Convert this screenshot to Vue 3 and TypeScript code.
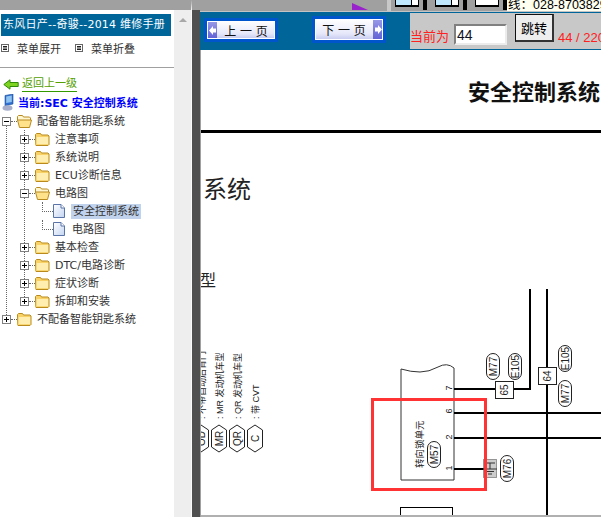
<script setup lang="ts">
interface TreeRow {
  label: string
  depth: number
  kind: 'folder' | 'open' | 'doc'
  toggle?: '+' | '-'
  active?: boolean
}

const rows: TreeRow[] = [
  { label: '配备智能钥匙系统', depth: 0, kind: 'open', toggle: '-' },
  { label: '注意事项', depth: 1, kind: 'folder', toggle: '+' },
  { label: '系统说明', depth: 1, kind: 'folder', toggle: '+' },
  { label: 'ECU诊断信息', depth: 1, kind: 'folder', toggle: '+' },
  { label: '电路图', depth: 1, kind: 'open', toggle: '-' },
  { label: '安全控制系统', depth: 2, kind: 'doc', active: true },
  { label: '电路图', depth: 2, kind: 'doc' },
  { label: '基本检查', depth: 1, kind: 'folder', toggle: '+' },
  { label: 'DTC/电路诊断', depth: 1, kind: 'folder', toggle: '+' },
  { label: '症状诊断', depth: 1, kind: 'folder', toggle: '+' },
  { label: '拆卸和安装', depth: 1, kind: 'folder', toggle: '+' },
  { label: '不配备智能钥匙系统', depth: 0, kind: 'folder', toggle: '+' },
]

const menuActions = ['菜单展开', '菜单折叠']

// 图例：竖排的六边形标记
const tags = [
  { x: 0, code: 'OD', text: ': 不带自动后背门' },
  { x: 18, code: 'MR', text: ': MR 发动机车型' },
  { x: 36, code: 'QR', text: ': QR 发动机车型' },
  { x: 54, code: 'C', text: ': 带 CVT' },
]

const pills = [
  { x: 285, y: 303, t: 'M77' },
  { x: 307, y: 303, t: 'E105' },
  { x: 357, y: 295, t: 'E105' },
  { x: 357, y: 330, t: 'M77' },
  { x: 299, y: 405, t: 'M76' },
  { x: 226, y: 391, t: 'M57' },
]

const boxes = [
  { x: 294, y: 331, t: '65' },
  { x: 337, y: 317, t: '64' },
]

const pins = [
  { y: 338, t: '7' },
  { y: 361, t: '6' },
  { y: 387, t: '2' },
  { y: 418, t: '1' },
]
</script>

<template>
  <div class="page">
    <aside class="side">
      <div class="side-gap"></div>
      <div class="side-title">东风日产--奇骏--2014 维修手册</div>
      <div class="menu-actions">
        <span v-for="a in menuActions" :key="a" class="menu-action">
          <svg width="8" height="8" viewBox="0 0 8 8"><rect x=".5" y=".5" width="7" height="7" fill="#fff" stroke="#666" /><path d="M2 2.500h4M2 4h4M2 5.500h4" stroke="#222" /></svg>
          {{ a }}
        </span>
      </div>
      <div class="back-row">
        <svg width="16" height="11" viewBox="0 0 16 11"><path d="M.8 5.500L7 .8v2.700h8.200v4H7v2.700z" fill="#7ed321" stroke="#2f8a05" /></svg>
        <a class="back-link">返回上一级</a>
      </div>
      <div class="current-row">
        <svg width="12" height="17" viewBox="0 0 12 17"><path d="M3 1.500L11 0v10L3 12z" fill="#2f6fd0" stroke="#1c4f9a" stroke-width=".6" /><path d="M4.200 2.500l5.600-1v6.500l-5.600 1z" fill="#8fc4f2" /><ellipse cx="5.500" cy="14" rx="5" ry="2.800" fill="#a6aecb" /></svg>
        <span>当前:SEC 安全控制系统</span>
      </div>
      <ul class="tree">
        <li v-for="(r, i) in rows" :key="i" class="tree-row" :class="'depth-' + r.depth">
          <span v-if="r.toggle" class="toggle">
            <svg width="9" height="9" viewBox="0 0 9 9"><rect x=".5" y=".5" width="8" height="8" fill="#fff" stroke="#808080" /><path :d="r.toggle === '+' ? 'M2 4.500h5M4.500 2v5' : 'M2 4.500h5'" stroke="#000" /></svg>
          </span>
          <span v-else class="elbow"></span>
          <span v-if="r.toggle" class="dots"></span>
          <svg v-if="r.kind === 'folder'" class="node-icon" width="15" height="13" viewBox="0 0 15 13"><path d="M.5 3V1.500l1-1h4l1 1.500h6.500l1 1v8.500l-1 1h-12l-1-1z" fill="#f8d266" stroke="#b98a1e" /><path d="M1.800 4h11.400v7.200H1.800z" fill="#ffeeb0" /></svg>
          <svg v-else-if="r.kind === 'open'" class="node-icon" width="15" height="13" viewBox="0 0 15 13"><path d="M.5 5V1.500l1-1h4l1 1.500h6l1 1v2" fill="#fff6d0" stroke="#b98a1e" /><path d="M.5 5h14l-2 7.500h-10z" fill="#ffe28a" stroke="#b98a1e" /></svg>
          <svg v-else class="node-icon doc-icon" width="12" height="14" viewBox="0 0 12 14"><defs><linearGradient id="docFill" x1="0" y1="0" x2="1" y2="1"><stop offset="0" stop-color="#ffffff" /><stop offset="1" stop-color="#c3d5f2" /></linearGradient></defs><path d="M.5.500h7.500l3.500 3.500v9.500H.5z" fill="url(#docFill)" stroke="#5b74a8" /><path d="M8 .500v3.500h3.500" fill="#fff" stroke="#5b74a8" /></svg>
          <span class="label" :class="{ active: r.active }">{{ r.label }}</span>
        </li>
      </ul>
    </aside>
    <div class="scrollbar"><span class="arrow"></span></div>
    <div class="splitter"></div>
    <main class="main">
      <div class="top-strip">
        <svg class="flag" width="16" height="8" viewBox="0 0 16 8"><path d="M0 0l16 7H0z" fill="#9922cc" /></svg>
        <span class="pane"></span>
        <span class="thumb blue"><i></i></span>
        <span class="block"></span>
        <span class="thumb split"><i></i></span>
        <span class="block"></span>
        <span class="thumb plain"><i></i></span>
        <span class="block"></span>
        <span class="hotline">线：028-87038296</span>
      </div>
      <div class="toolbar">
        <button class="page-btn prev"><span class="cap">
          <svg width="7" height="9" viewBox="0 0 7 9"><path d="M0 4.500L4 0v2.500h3v4H4V9z" fill="#fff" /></svg>
        </span><span class="txt">上 一 页</span></button>
        <button class="page-btn next"><span class="txt">下 一 页</span><span class="cap">
          <svg width="7" height="9" viewBox="0 0 7 9"><path d="M7 4.500L3 0v2.500H0v4h3V9z" fill="#fff" /></svg>
        </span></button>
        <div class="jump">
          <span class="jump-label">当前为</span>
          <input class="jump-input" value="44" />
          <button class="jump-btn">跳转</button>
          <span class="jump-count">44 / 220</span>
        </div>
      </div>
      <svg class="sheet" width="400" height="467" viewBox="0 0 400 467">
        <text x="267" y="50" class="t-title">安全控制系统</text>
        <rect x="0" y="80" width="400" height="3" fill="#000" />
        <text x="2" y="148" class="t-head">系统</text>
        <text x="-1" y="236" class="t-sub">型</text>

        <g v-for="t in tags" :key="t.code">
          <path :d="`M${t.x} 375l7.500 5v17L${t.x} 402l-7.500-5v-17z`" fill="#fff" stroke="#222" />
          <text :transform="`translate(${t.x} 388.500) rotate(-90)`" class="t-mid" text-anchor="middle" dy=".35em">{{ t.code }}</text>
          <text :transform="`translate(${t.x + 4} 369) rotate(-90)`" class="t-small">{{ t.text }}</text>
        </g>

        <path d="M200 319q10 3 19 3t18-5 16 1V430H200z" fill="#fff" stroke="#333" />
        <rect x="199.500" y="457.500" width="52" height="10" fill="#fff" stroke="#000" />
        <path d="M253 339H329V239M253 363H400M253 388H400M253 419H294" fill="none" stroke="#000" stroke-width="2" />
        <path d="M346 239V465" fill="none" stroke="#000" stroke-width="2" />

        <g v-for="b in boxes" :key="b.t">
          <rect :x="b.x + .5" :y="b.y + .5" width="18" height="17" fill="#fff" stroke="#222" />
          <text :transform="`translate(${b.x + 9} ${b.y + 9}) rotate(-90)`" class="t-mid" text-anchor="middle" dy=".35em">{{ b.t }}</text>
        </g>
        <g v-for="p in pills" :key="p.x + p.t">
          <rect :x="p.x + .5" :y="p.y + .5" width="13" height="26" rx="6.500" fill="#fff" stroke="#222" />
          <text :transform="`translate(${p.x + 7} ${p.y + 13.500}) rotate(-90)`" class="t-mid" text-anchor="middle" dy=".35em">{{ p.t }}</text>
        </g>

        <text transform="translate(222 418) rotate(-90)" class="t-label">转向锁单元</text>
        <text v-for="n in pins" :key="n.t" :transform="`translate(251 ${n.y}) rotate(-90)`" class="t-small" text-anchor="middle">{{ n.t }}</text>

        <rect x="282.500" y="409.500" width="13" height="18" fill="#ccc" stroke="#444" stroke-dasharray="1 1" />
        <path d="M282 419H296M284 413H294M285 421.500H293M287 424H291M289 419V413" fill="none" stroke="#333" />

        <rect x="171.500" y="349.500" width="113" height="90" fill="none" stroke="#f33" stroke-width="3" />
        <rect x="0" y="465" width="400" height="2" fill="#b0b0b0" />
      </svg>
    </main>
  </div>
</template>

<style scoped>
.page {
  display: flex;
  width: 601px;
  height: 517px;
  overflow: hidden;
  background: #fff;
  font-family: "DejaVu Sans", "Noto Sans CJK SC", sans-serif;
}

.side {
  width: 174px;
  flex: none;
  background: #fff;
  color: #333;
  font-size: 11px;
}

.side-gap {
  height: 10px;
  margin-bottom: 4px;
  background: #a0a0a0;
}

.side-title {
  height: 22px;
  line-height: 21px;
  margin: 0 3px 0 1px;
  padding-left: 2px;
  background: #006699;
  color: #fff;
  letter-spacing: .25px;
  white-space: nowrap;
  overflow: hidden;
}

.menu-actions {
  display: flex;
  gap: 14px;
  box-sizing: border-box;
  height: 32px;
  padding: 4px 0 0 1px;
  border-bottom: 1px solid #a0a0a0;
}

.menu-action {
  display: flex;
  align-items: center;
  gap: 8px;
  height: 16px;
}

.back-row {
  display: flex;
  align-items: flex-start;
  gap: 3px;
  box-sizing: border-box;
  height: 24px;
  padding: 10px 0 0 3px;
}

.back-row svg {
  margin-top: 1px;
}

.back-link {
  margin-top: -1px;
  color: #55a000;
  border-bottom: 1px solid #339900;
  line-height: 14px;
}

.current-row {
  display: flex;
  align-items: center;
  gap: 4px;
  height: 20px;
  padding-left: 2px;
  color: #0000ff;
  font-weight: bold;
  white-space: nowrap;
}

.tree {
  position: relative;
  list-style: none;
  margin: 0;
  padding: 0;
}

/* 树的竖向虚线 */
.tree::before,
.tree::after {
  content: "";
  position: absolute;
  border-left: 1px dotted #666;
}

.tree::before {
  left: 6px;
  top: 13px;
  height: 192px;
}

.tree::after {
  left: 24px;
  top: 18px;
  height: 171px;
}

.tree-row {
  display: flex;
  align-items: center;
  height: 18px;
  white-space: nowrap;
}

.depth-0 { padding-left: 2px; }
.depth-1 { padding-left: 20px; }
.depth-2 { padding-left: 42px; }

.toggle {
  position: relative;
  z-index: 1;
  width: 9px;
  height: 9px;
  line-height: 0;
}

.elbow {
  align-self: flex-start;
  width: 10px;
  height: 9px;
  border-left: 1px dotted #666;
  border-bottom: 1px dotted #666;
}

.dots {
  width: 6px;
  border-top: 1px dotted #666;
}

.node-icon {
  flex: none;
  margin-right: 4px;
}

.doc-icon {
  margin-right: 6px;
}

.label {
  padding: 0 1px;
  line-height: 15px;
}

.label.active {
  padding: 0 2px;
  background: #c0d2ec;
}

.scrollbar {
  box-sizing: border-box;
  width: 18px;
  flex: none;
  background: #eeeeee;
  border-top: 10px solid #a0a0a0;
  border-right: 1px solid #fafafa;
}

.arrow {
  display: block;
  width: 0;
  margin: 8px auto 0;
  border: 4px solid transparent;
  border-top: 0;
  border-bottom: 4px solid #a8a8a8;
}

.splitter {
  width: 8px;
  flex: none;
  background: #505050;
  border-top: 10px solid #a0a0a0;
}

.main {
  flex: 1;
  min-width: 0;
  display: flex;
  flex-direction: column;
  overflow: hidden;
}

.top-strip {
  box-sizing: border-box;
  height: 12px;
  flex: none;
  display: flex;
  align-items: flex-start;
  background: #a0a0a0;
  border-bottom: 1px solid #c4c4c4;
  padding-left: 152px;
  overflow: hidden;
}

.flag {
  flex: none;
  margin-top: 3px;
}

.pane {
  flex: none;
  width: 4px;
  height: 11px;
  margin: 0 4px 0 19px;
  background: #c8c8c8;
}

.thumb {
  flex: none;
  box-sizing: border-box;
  width: 24px;
  height: 7px;
  border: 1px solid #000;
  border-top: 0;
  border-bottom-width: 2px;
  display: block;
}

.thumb i {
  display: block;
  box-sizing: border-box;
  height: 100%;
  margin-left: 15px;
  width: 7px;
  background: #fff;
  border-left: 1px solid #000;
}

.thumb.blue,
.thumb.split {
  background: #bfe8ff;
}

.thumb.plain {
  background: #fff;
}

.thumb.plain i {
  display: none;
}

.block {
  flex: none;
  width: 4px;
  height: 10px;
  margin: 0 8px 0 4px;
  background: #000;
}

.block:nth-last-child(2) {
  margin-right: 0;
}

.hotline {
  flex: none;
  width: 94px;
  padding-left: 1px;
  height: 11px;
  color: #000;
  background: #fffff0;
  font: 12.500px/11px "Liberation Sans", "Noto Sans CJK SC", sans-serif;
  white-space: nowrap;
}

.toolbar {
  box-sizing: border-box;
  height: 38px;
  flex: none;
  display: flex;
  align-items: flex-start;
  background: #006699;
  padding-left: 4px;
}

.page-btn {
  flex: none;
  display: flex;
  align-items: stretch;
  box-sizing: border-box;
  width: 74px;
  padding: 0;
  background: linear-gradient(#ffffff, #e6e8fa 70%, #c4c8ee);
  border: 3px solid #0055cc;
  outline: 1px solid #fff;
  outline-offset: -4px;
  font: 12px "DejaVu Sans", "Noto Sans CJK SC", sans-serif;
  color: #111;
}

.prev {
  height: 24px;
  margin: 6px 34px 0 0;
}

.next {
  height: 27px;
  margin-top: 4px;
}

.cap {
  display: flex;
  align-items: center;
  justify-content: center;
  width: 10px;
  flex: none;
  background: linear-gradient(#9a9ae8, #5f5fd4);
}

.txt {
  flex: 1;
  align-self: center;
  text-align: center;
}

.jump {
  display: flex;
  align-items: flex-start;
  flex: 1;
  min-width: 0;
  height: 36px;
  margin: 1px 0 0 24px;
  overflow: hidden;
  background: #c8c8c8;
  color: #ff2020;
  white-space: nowrap;
  font: 13px "Liberation Sans", "Noto Sans CJK SC", sans-serif;
}

.jump-label {
  margin-top: 14px;
  line-height: 20px;
}

.jump-input {
  flex: none;
  box-sizing: border-box;
  width: 53px;
  height: 21px;
  margin: 11px 8px 0 5px;
  padding: 0 1px;
  border: 2px solid #808080;
  border-right-color: #ececec;
  border-bottom-color: #ececec;
  outline: none;
  font: 14px "Liberation Sans", sans-serif;
  color: #112;
}

.jump-btn {
  flex: none;
  box-sizing: border-box;
  width: 39px;
  height: 28px;
  margin: 1px 4px 0 0;
  padding: 0;
  background: #eee;
  border: 1px solid #111;
  border-right: 2px solid #333;
  border-bottom: 2px solid #333;
  font: 13px "Liberation Sans", "Noto Sans CJK SC", sans-serif;
  color: #000;
}

.jump-count {
  margin-top: 15px;
  line-height: 20px;
}

.sheet {
  flex: none;
  display: block;
  border-left: 1px solid #a0a0a0;
}

.sheet text {
  font-family: "Liberation Sans", "Noto Sans CJK SC", sans-serif;
  fill: #222;
}

.sheet .t-title { font-size: 22px; font-weight: bold; fill: #111; }
.sheet .t-head { font-size: 24px; }
.sheet .t-sub { font-size: 16px; }
.sheet .t-small { font-size: 9px; }
.sheet .t-mid { font-size: 10px; }
.sheet .t-label { font-size: 9.500px; }
</style>

<style>
html, body { margin: 0; background: #fff; }
</style>
